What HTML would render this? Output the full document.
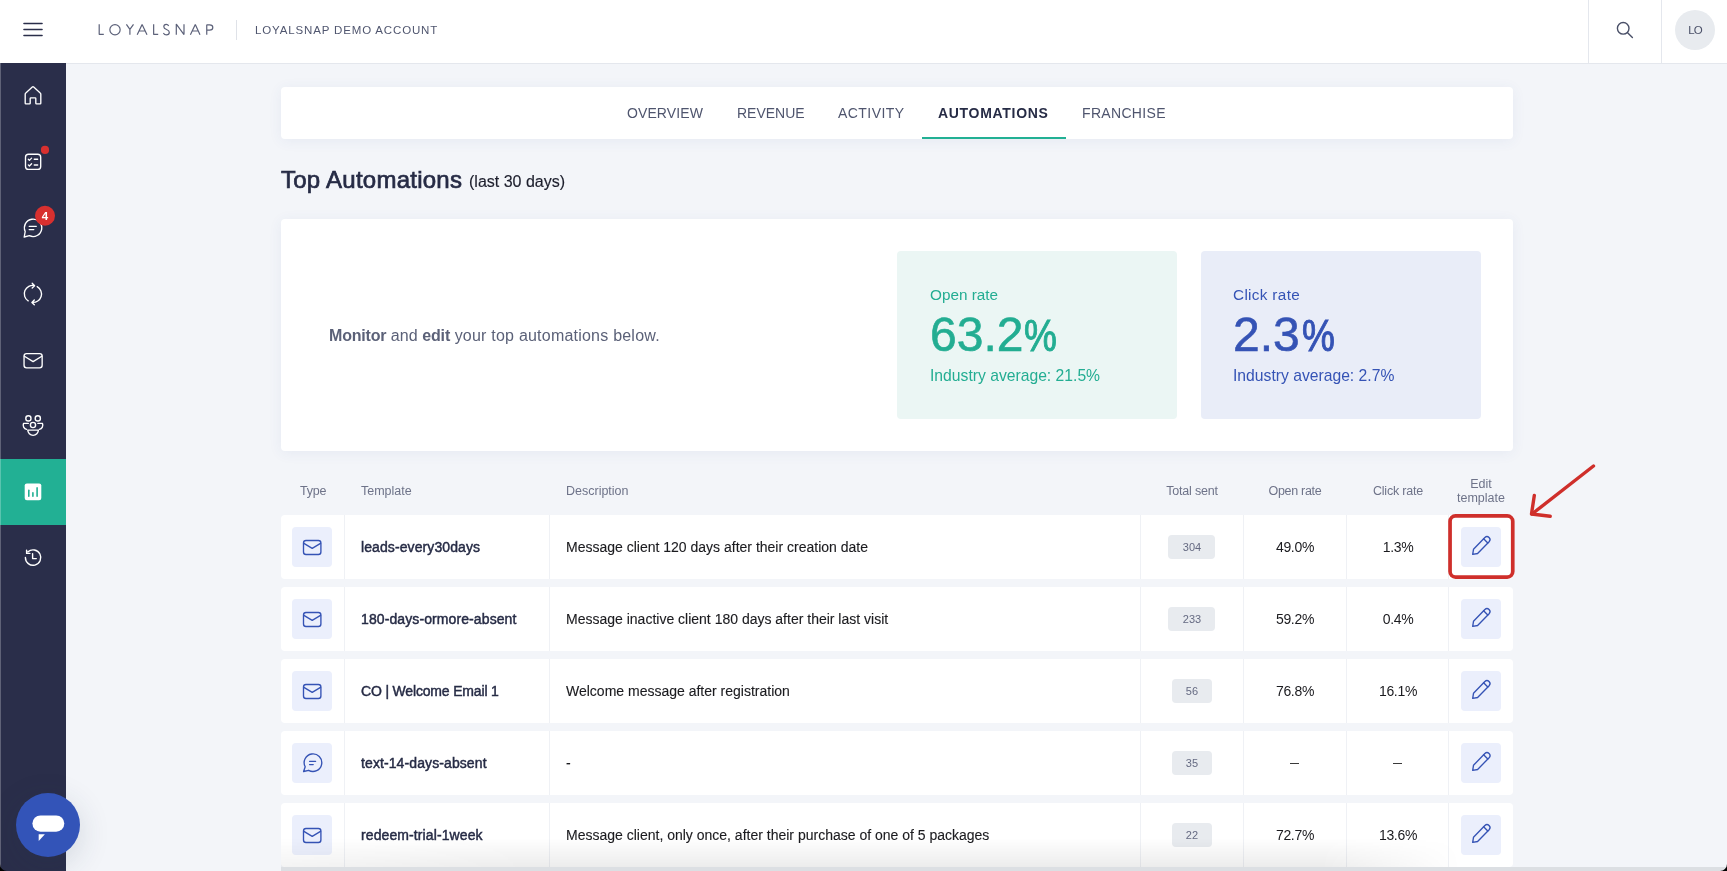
<!DOCTYPE html>
<html><head><meta charset="utf-8"><title>Loyalsnap</title>
<style>
html,body{margin:0;padding:0;}
body{width:1727px;height:871px;overflow:hidden;position:relative;background:#f3f5f9;font-family:"Liberation Sans",sans-serif;}
.t{position:absolute;line-height:0;white-space:nowrap;will-change:transform;}
.a{position:absolute;}
svg{position:absolute;overflow:visible;}
.card{position:absolute;background:#fff;border-radius:4px;box-shadow:0 2px 14px rgba(60,80,150,0.07);}
.row{position:absolute;left:281px;width:1232px;height:64px;background:#fff;border-radius:4px;}
.vd{position:absolute;top:0;width:1px;height:64px;background:#eff1f5;}
.ib{position:absolute;width:40px;height:40px;background:#ebeffc;border-radius:4px;top:12px;}
.badge{position:absolute;top:20px;height:24px;background:#e8ebef;border-radius:4px;}
</style></head><body>
<div class="a" style="left:0;top:0;width:1727px;height:63px;background:#fff;border-bottom:1px solid #e4e7ed;"></div>
<svg style="left:0;top:0" width="60" height="60"><g stroke="#2a2e4a" stroke-width="1.6" stroke-linecap="round"><line x1="24" y1="23.5" x2="42" y2="23.5"/><line x1="24" y1="29.5" x2="42" y2="29.5"/><line x1="24" y1="35.5" x2="42" y2="35.5"/></g></svg>
<svg style="left:0;top:0" width="230" height="60"><g fill="none" stroke="#5c6179" stroke-width="1.2" stroke-linecap="butt" stroke-linejoin="bevel">
<path d="M99.2 24.3 V34.4 H103.8"/>
<circle cx="115" cy="29.75" r="5.15"/>
<path d="M126.4 24.3 L129.9 29.3 L133.5 24.3 M129.9 29.3 V34.8"/>
<path d="M137.2 34.8 L142.1 24.4 L147 34.8 M139.4 31 H144.9"/>
<path d="M153.65 24.3 V34.4 H158.2"/>
<path d="M168.7 25.9 C168.1 24.9 167.3 24.3 166.3 24.3 C164.8 24.3 163.8 25.3 163.8 26.7 C163.8 30.2 169.3 28.9 169.3 32.3 C169.3 33.9 168.1 34.9 166.4 34.9 C165.1 34.9 164 34.2 163.4 33"/>
<path d="M176.3 34.8 V24.1 L184 34.6 V24.3"/>
<path d="M190.4 34.8 L195.3 24.4 L200 34.8 M192.5 31 H198"/>
<path d="M206.75 34.8 V24.9 H209.6 C211.6 24.9 212.8 25.9 212.8 27.5 C212.8 29.1 211.6 30.1 209.6 30.1 H206.75"/>
</g></svg>
<div class="a" style="left:236px;top:20px;width:1px;height:20px;background:#dfe2e8"></div>
<div class="t" style="left:254.60px;top:30.00px;font-size:11.5px;color:#50566f;letter-spacing:0.85px;">LOYALSNAP DEMO ACCOUNT</div>
<div class="a" style="left:1588px;top:0;width:1px;height:63px;background:#e4e7ed"></div>
<div class="a" style="left:1661px;top:0;width:1px;height:63px;background:#e4e7ed"></div>
<svg style="left:0;top:0" width="1727" height="63"><g stroke="#4a5068" stroke-width="1.4" fill="none" stroke-linecap="round"><circle cx="1623.2" cy="28.3" r="5.8"/><line x1="1627.6" y1="32.7" x2="1632.4" y2="37.5"/></g></svg>
<div class="a" style="left:1675px;top:10px;width:40px;height:40px;border-radius:50%;background:#e8ebef"></div>
<div class="t" style="left:1494.60px;width:400px;text-align:center;top:30.00px;font-size:11.5px;color:#4a5068;letter-spacing:-0.9px;">LO</div>
<div class="a" style="left:0;top:63px;width:66px;height:808px;background:#2a2e4a"></div>
<div class="a" style="left:0;top:459px;width:66px;height:66px;background:#22b094"></div>
<svg style="left:0;top:0" width="66" height="871"><g fill="none" stroke="#ffffff" stroke-width="1.35" stroke-linecap="round" stroke-linejoin="round">
<path d="M25.2 103.2 V94.2 Q25.2 93.4 25.8 92.9 L32.3 87.1 Q33 86.5 33.7 87.1 L40.2 92.9 Q40.8 93.4 40.8 94.2 V103.2 Q40.8 103.9 40.1 103.9 H36.5 Q35.8 103.9 35.8 103.2 V98.6 Q35.8 97.9 35.1 97.9 H30.9 Q30.2 97.9 30.2 98.6 V103.2 Q30.2 103.9 29.5 103.9 H25.9 Q25.2 103.9 25.2 103.2 Z"/>
<rect x="25.5" y="154.2" width="15.2" height="15.2" rx="3"/>
<path d="M28.3 159.3 L29.4 160.4 L31.6 158.1 M28.3 164.9 L29.4 166 L31.6 163.7" stroke-width="1.3"/>
<path d="M34.3 159.2 H37.6 M34.3 164.9 H37.6" stroke-width="1.5"/>
<path d="M25.2 231.5 A8.7 8.7 0 1 1 29.4 235.7 L24.2 237 Z"/>
<path d="M29.2 226.3 H36.3 M29.2 229.6 H33.8"/>
<path d="M34.5 285.6 A8.4 8.4 0 0 0 28.2 300.9 M34.6 285.7 L32.2 283.3 M34.6 285.7 L32.2 288.1"/>
<path d="M37.2 286.7 A8.4 8.4 0 0 1 32.3 302.4 M31.9 302.4 L34.3 300 M31.9 302.4 L34.3 304.8"/>
<rect x="24.05" y="353.55" width="18.1" height="14.3" rx="2.5"/>
<path d="M24.4 356.2 L33.1 361.6 L41.8 356.2"/>
<circle cx="28.4" cy="418.4" r="2.6" stroke-width="1.4"/>
<circle cx="37.8" cy="418.4" r="2.6" stroke-width="1.4"/>
<circle cx="33" cy="425" r="2.6" stroke-width="1.4"/>
<path d="M27.8 430.1 H38.4 A5.3 5.3 0 0 1 27.8 430.1 Z" stroke-width="1.4"/>
<path d="M28.3 423.4 H23.6 A4.3 4.3 0 0 0 26.6 429.4 M37.9 423.4 H42.4 A4.3 4.3 0 0 1 39.4 429.4" stroke-width="1.4"/>
<path d="M25.4 557.5 A7.7 7.7 0 1 0 28 551.8 M26.6 550.1 V553.4 H29.9 M32.6 553.8 V558.6 H36.3" stroke-width="1.4"/>
</g>
<rect x="24.7" y="483.4" width="16.6" height="16.9" rx="2.2" fill="#fff"/>
<g stroke="#22b094" stroke-width="1.6" stroke-linecap="round"><line x1="28.8" y1="490.2" x2="28.8" y2="496.3"/><line x1="32.9" y1="492.8" x2="32.9" y2="496.3"/><line x1="37.1" y1="487.9" x2="37.1" y2="496.3"/></g>
<circle cx="45" cy="149.9" r="4.1" fill="#d8302f"/>
<circle cx="45" cy="215.8" r="10" fill="#d8302f"/>
</svg>
<div class="t" style="left:-155.00px;width:400px;text-align:center;top:216.00px;font-size:11.5px;color:#fff;font-weight:700;">4</div>
<div class="card" style="left:281px;top:87px;width:1232px;height:52px;"></div>
<div class="t" style="left:627.30px;top:113.00px;font-size:14px;color:#4f556e;letter-spacing:0.1px;">OVERVIEW</div>
<div class="t" style="left:736.80px;top:113.00px;font-size:14px;color:#4f556e;">REVENUE</div>
<div class="t" style="left:837.60px;top:113.00px;font-size:14px;color:#4f556e;letter-spacing:0.45px;">ACTIVITY</div>
<div class="t" style="left:937.80px;top:113.00px;font-size:14px;color:#262b45;font-weight:700;letter-spacing:0.7px;">AUTOMATIONS</div>
<div class="t" style="left:1081.60px;top:113.00px;font-size:14px;color:#4f556e;letter-spacing:0.33px;">FRANCHISE</div>
<div class="a" style="left:921.5px;top:137px;width:144px;height:2px;background:#22b094"></div>
<div class="t" style="left:281.00px;top:180.00px;font-size:24px;color:#262b45;letter-spacing:0.25px;-webkit-text-stroke:0.7px #262b45;">Top Automations</div>
<div class="t" style="left:468.50px;top:182.00px;font-size:16px;color:#1c1e2c;-webkit-text-stroke:0.15px #1c1e2c;">(last 30 days)</div>
<div class="card" style="left:281px;top:219px;width:1232px;height:232px;"></div>
<div class="t" style="left:329.00px;top:336.00px;font-size:16px;color:#5b6178;letter-spacing:0.08px;"><b style="letter-spacing:-0.2px">Monitor</b> and <b style="letter-spacing:-0.15px">edit</b> <span style="letter-spacing:0.22px">your top automations below.</span></div>
<div class="a" style="left:897px;top:251px;width:280px;height:168px;background:#ebf6f4;border-radius:4px"></div>
<div class="a" style="left:1201px;top:251px;width:280px;height:168px;background:#e9edf8;border-radius:4px"></div>
<div class="t" style="left:929.50px;top:295.00px;font-size:15.3px;color:#23ad92;">Open rate</div>
<div class="t" style="left:929.50px;top:335.00px;font-size:48px;color:#23ad92;-webkit-text-stroke:0.6px #23ad92;">63.2<span style="display:inline-block;font-size:44px;transform:scaleX(0.84);transform-origin:0 0;margin-left:1px;-webkit-text-stroke-width:1px">%</span></div>
<div class="t" style="left:929.50px;top:376.00px;font-size:15.7px;color:#23ad92;">Industry average: 21.5%</div>
<div class="t" style="left:1233.30px;top:295.00px;font-size:15.3px;color:#3553b5;letter-spacing:0.33px;">Click rate</div>
<div class="t" style="left:1232.50px;top:335.00px;font-size:48px;color:#3553b5;-webkit-text-stroke:0.6px #3553b5;">2.3<span style="display:inline-block;font-size:44px;transform:scaleX(0.84);transform-origin:0 0;margin-left:2px;-webkit-text-stroke-width:1px">%</span></div>
<div class="t" style="left:1233.00px;top:376.00px;font-size:15.7px;color:#3553b5;">Industry average: 2.7%</div>
<div class="t" style="left:300.20px;top:491.00px;font-size:12.5px;color:#6e7389;letter-spacing:-0.2px;">Type</div>
<div class="t" style="left:361.30px;top:491.00px;font-size:12.5px;color:#6e7389;">Template</div>
<div class="t" style="left:565.80px;top:491.00px;font-size:12.5px;color:#6e7389;">Description</div>
<div class="t" style="left:992.00px;width:400px;text-align:center;top:491.00px;font-size:12.5px;color:#6e7389;letter-spacing:-0.2px;">Total sent</div>
<div class="t" style="left:1095.00px;width:400px;text-align:center;top:491.00px;font-size:12.5px;color:#6e7389;letter-spacing:-0.3px;">Open rate</div>
<div class="t" style="left:1197.50px;width:400px;text-align:center;top:491.00px;font-size:12.5px;color:#6e7389;letter-spacing:-0.2px;">Click rate</div>
<div class="t" style="left:1281.00px;width:400px;text-align:center;top:484.00px;font-size:12.5px;color:#6e7389;">Edit</div>
<div class="t" style="left:1281.00px;width:400px;text-align:center;top:498.00px;font-size:12.5px;color:#6e7389;">template</div>
<div class="row" style="top:515px"><div class="vd" style="left:63px"></div><div class="vd" style="left:268px"></div><div class="vd" style="left:859px"></div><div class="vd" style="left:962px"></div><div class="vd" style="left:1065px"></div><div class="vd" style="left:1167px"></div><div class="ib" style="left:11px"><svg style="left:0;top:0" width="40" height="40"><g fill="none" stroke="#3553b5" stroke-width="1.35" stroke-linecap="round" stroke-linejoin="round"><rect x="11.5" y="13.5" width="17.4" height="14" rx="2.5"/><path d="M11.9 16.4 L20.2 21.4 L28.5 16.4"/></g></svg></div><div class="ib" style="left:1180px"><svg style="left:0;top:0" width="40" height="40"><g transform="translate(-0.2 0.7)" fill="none" stroke="#3553b5" stroke-width="1.35" stroke-linecap="round" stroke-linejoin="round"><path d="M11.9 26.7 L12.7 21.6 L24.08 9.78 A3 3 0 0 1 28.32 14.02 L16.8 25.8 Z"/><path d="M22.8 11 L27 15.2"/></g></svg></div><div class="badge" style="left:887.0px;width:47px"></div></div>
<div class="t" style="left:361.30px;top:547.00px;font-size:14px;color:#262b45;letter-spacing:0.1px;-webkit-text-stroke:0.45px #262b45;">leads-every30days</div>
<div class="t" style="left:565.80px;top:547.00px;font-size:14px;color:#1b1b1f;-webkit-text-stroke:0.12px #1b1b1f;">Message client 120 days after their creation date</div>
<div class="t" style="left:991.50px;width:400px;text-align:center;top:547.00px;font-size:11px;color:#656a82;letter-spacing:0.1px;">304</div>
<div class="t" style="left:1094.50px;width:400px;text-align:center;top:547.00px;font-size:14px;color:#1b1b1f;letter-spacing:-0.3px;">49.0%</div>
<div class="t" style="left:1197.50px;width:400px;text-align:center;top:547.00px;font-size:14px;color:#1b1b1f;letter-spacing:-0.3px;">1.3%</div>
<div class="row" style="top:587px"><div class="vd" style="left:63px"></div><div class="vd" style="left:268px"></div><div class="vd" style="left:859px"></div><div class="vd" style="left:962px"></div><div class="vd" style="left:1065px"></div><div class="vd" style="left:1167px"></div><div class="ib" style="left:11px"><svg style="left:0;top:0" width="40" height="40"><g fill="none" stroke="#3553b5" stroke-width="1.35" stroke-linecap="round" stroke-linejoin="round"><rect x="11.5" y="13.5" width="17.4" height="14" rx="2.5"/><path d="M11.9 16.4 L20.2 21.4 L28.5 16.4"/></g></svg></div><div class="ib" style="left:1180px"><svg style="left:0;top:0" width="40" height="40"><g transform="translate(-0.2 0.7)" fill="none" stroke="#3553b5" stroke-width="1.35" stroke-linecap="round" stroke-linejoin="round"><path d="M11.9 26.7 L12.7 21.6 L24.08 9.78 A3 3 0 0 1 28.32 14.02 L16.8 25.8 Z"/><path d="M22.8 11 L27 15.2"/></g></svg></div><div class="badge" style="left:887.0px;width:47px"></div></div>
<div class="t" style="left:361.30px;top:619.00px;font-size:14px;color:#262b45;letter-spacing:0.1px;-webkit-text-stroke:0.45px #262b45;">180-days-ormore-absent</div>
<div class="t" style="left:565.80px;top:619.00px;font-size:14px;color:#1b1b1f;-webkit-text-stroke:0.12px #1b1b1f;">Message inactive client 180 days after their last visit</div>
<div class="t" style="left:991.50px;width:400px;text-align:center;top:619.00px;font-size:11px;color:#656a82;letter-spacing:0.1px;">233</div>
<div class="t" style="left:1094.50px;width:400px;text-align:center;top:619.00px;font-size:14px;color:#1b1b1f;letter-spacing:-0.3px;">59.2%</div>
<div class="t" style="left:1197.50px;width:400px;text-align:center;top:619.00px;font-size:14px;color:#1b1b1f;letter-spacing:-0.3px;">0.4%</div>
<div class="row" style="top:659px"><div class="vd" style="left:63px"></div><div class="vd" style="left:268px"></div><div class="vd" style="left:859px"></div><div class="vd" style="left:962px"></div><div class="vd" style="left:1065px"></div><div class="vd" style="left:1167px"></div><div class="ib" style="left:11px"><svg style="left:0;top:0" width="40" height="40"><g fill="none" stroke="#3553b5" stroke-width="1.35" stroke-linecap="round" stroke-linejoin="round"><rect x="11.5" y="13.5" width="17.4" height="14" rx="2.5"/><path d="M11.9 16.4 L20.2 21.4 L28.5 16.4"/></g></svg></div><div class="ib" style="left:1180px"><svg style="left:0;top:0" width="40" height="40"><g transform="translate(-0.2 0.7)" fill="none" stroke="#3553b5" stroke-width="1.35" stroke-linecap="round" stroke-linejoin="round"><path d="M11.9 26.7 L12.7 21.6 L24.08 9.78 A3 3 0 0 1 28.32 14.02 L16.8 25.8 Z"/><path d="M22.8 11 L27 15.2"/></g></svg></div><div class="badge" style="left:890.5px;width:40px"></div></div>
<div class="t" style="left:361.30px;top:691.00px;font-size:14px;color:#262b45;letter-spacing:-0.17px;-webkit-text-stroke:0.45px #262b45;">CO | Welcome Email 1</div>
<div class="t" style="left:565.80px;top:691.00px;font-size:14px;color:#1b1b1f;-webkit-text-stroke:0.12px #1b1b1f;">Welcome message after registration</div>
<div class="t" style="left:991.50px;width:400px;text-align:center;top:691.00px;font-size:11px;color:#656a82;letter-spacing:0.1px;">56</div>
<div class="t" style="left:1094.50px;width:400px;text-align:center;top:691.00px;font-size:14px;color:#1b1b1f;letter-spacing:-0.3px;">76.8%</div>
<div class="t" style="left:1197.50px;width:400px;text-align:center;top:691.00px;font-size:14px;color:#1b1b1f;letter-spacing:-0.3px;">16.1%</div>
<div class="row" style="top:731px"><div class="vd" style="left:63px"></div><div class="vd" style="left:268px"></div><div class="vd" style="left:859px"></div><div class="vd" style="left:962px"></div><div class="vd" style="left:1065px"></div><div class="vd" style="left:1167px"></div><div class="ib" style="left:11px"><svg style="left:0;top:0" width="40" height="40"><g fill="none" stroke="#3553b5" stroke-width="1.35" stroke-linecap="round" stroke-linejoin="round"><path d="M13.2 23.8 A8.8 8.8 0 1 1 16.6 27.3 L11.6 28.5 Z"/><path d="M17.6 18.3 H23.6 M17.6 21.6 H21.2"/></g></svg></div><div class="ib" style="left:1180px"><svg style="left:0;top:0" width="40" height="40"><g transform="translate(-0.2 0.7)" fill="none" stroke="#3553b5" stroke-width="1.35" stroke-linecap="round" stroke-linejoin="round"><path d="M11.9 26.7 L12.7 21.6 L24.08 9.78 A3 3 0 0 1 28.32 14.02 L16.8 25.8 Z"/><path d="M22.8 11 L27 15.2"/></g></svg></div><div class="badge" style="left:890.5px;width:40px"></div></div>
<div class="t" style="left:361.30px;top:763.00px;font-size:14px;color:#262b45;letter-spacing:0.1px;-webkit-text-stroke:0.45px #262b45;">text-14-days-absent</div>
<div class="t" style="left:565.80px;top:763.00px;font-size:14px;color:#1b1b1f;-webkit-text-stroke:0.12px #1b1b1f;">-</div>
<div class="t" style="left:991.50px;width:400px;text-align:center;top:763.00px;font-size:11px;color:#656a82;letter-spacing:0.1px;">35</div>
<div class="a" style="left:1289.5px;top:762.5px;width:9.5px;height:1.3px;background:#3a3a3a"></div>
<div class="a" style="left:1392.5px;top:762.5px;width:9.5px;height:1.3px;background:#3a3a3a"></div>
<div class="row" style="top:803px"><div class="vd" style="left:63px"></div><div class="vd" style="left:268px"></div><div class="vd" style="left:859px"></div><div class="vd" style="left:962px"></div><div class="vd" style="left:1065px"></div><div class="vd" style="left:1167px"></div><div class="ib" style="left:11px"><svg style="left:0;top:0" width="40" height="40"><g fill="none" stroke="#3553b5" stroke-width="1.35" stroke-linecap="round" stroke-linejoin="round"><rect x="11.5" y="13.5" width="17.4" height="14" rx="2.5"/><path d="M11.9 16.4 L20.2 21.4 L28.5 16.4"/></g></svg></div><div class="ib" style="left:1180px"><svg style="left:0;top:0" width="40" height="40"><g transform="translate(-0.2 0.7)" fill="none" stroke="#3553b5" stroke-width="1.35" stroke-linecap="round" stroke-linejoin="round"><path d="M11.9 26.7 L12.7 21.6 L24.08 9.78 A3 3 0 0 1 28.32 14.02 L16.8 25.8 Z"/><path d="M22.8 11 L27 15.2"/></g></svg></div><div class="badge" style="left:890.5px;width:40px"></div></div>
<div class="t" style="left:361.30px;top:835.00px;font-size:14px;color:#262b45;letter-spacing:0.1px;-webkit-text-stroke:0.45px #262b45;">redeem-trial-1week</div>
<div class="t" style="left:565.80px;top:835.00px;font-size:14px;color:#1b1b1f;-webkit-text-stroke:0.12px #1b1b1f;">Message client, only once, after their purchase of one of 5 packages</div>
<div class="t" style="left:991.50px;width:400px;text-align:center;top:835.00px;font-size:11px;color:#656a82;letter-spacing:0.1px;">22</div>
<div class="t" style="left:1094.50px;width:400px;text-align:center;top:835.00px;font-size:14px;color:#1b1b1f;letter-spacing:-0.3px;">72.7%</div>
<div class="t" style="left:1197.50px;width:400px;text-align:center;top:835.00px;font-size:14px;color:#1b1b1f;letter-spacing:-0.3px;">13.6%</div>
<svg style="left:0;top:0" width="1727" height="871"><rect x="1450.05" y="515.85" width="62.7" height="61.2" rx="5.5" fill="none" stroke="#cf2f2b" stroke-width="3.7"/></svg>
<svg style="left:0;top:0" width="1727" height="871"><g stroke="#cf2f2b" stroke-width="3.4" stroke-linecap="round" stroke-linejoin="round" fill="none"><path d="M1593.5 466 L1532 514"/><path d="M1534.3 495.5 L1531.5 514 L1550.2 516.2"/></g></svg>
<div class="a" style="left:16px;top:793px;width:64px;height:64px;border-radius:50%;background:#3354b8;box-shadow:0 8px 32px rgba(40,55,80,0.16)"></div>
<svg style="left:0;top:0" width="100" height="871"><rect x="32.4" y="815.5" width="31.9" height="16.2" rx="8.1" fill="#fff"/><path d="M38.7 834.3 L44.9 834.3 L38.7 841.1 Z" fill="#fff"/></svg>
<div class="a" style="left:281px;top:838px;width:1180px;height:29px;background:linear-gradient(to bottom, rgba(0,0,0,0) 0%, rgba(0,0,0,0.075) 100%);-webkit-mask-image:linear-gradient(to right, rgba(0,0,0,0.6) 0, #000 250px, #000 1040px, rgba(0,0,0,0) 1180px);"></div>
<div class="a" style="left:281px;top:867px;width:1446px;height:4px;background:rgba(20,25,40,0.10)"></div>
<div class="a" style="left:0;top:63px;width:1px;height:808px;background:rgba(255,255,255,0.25)"></div>
<svg style="left:0;top:0" width="1727" height="871"><path d="M0 871 V864 A7 7 0 0 0 7 871 Z" fill="#000"/><path d="M1727 871 H1720 A7 7 0 0 0 1727 864 Z" fill="#000"/></svg>
</body></html>
